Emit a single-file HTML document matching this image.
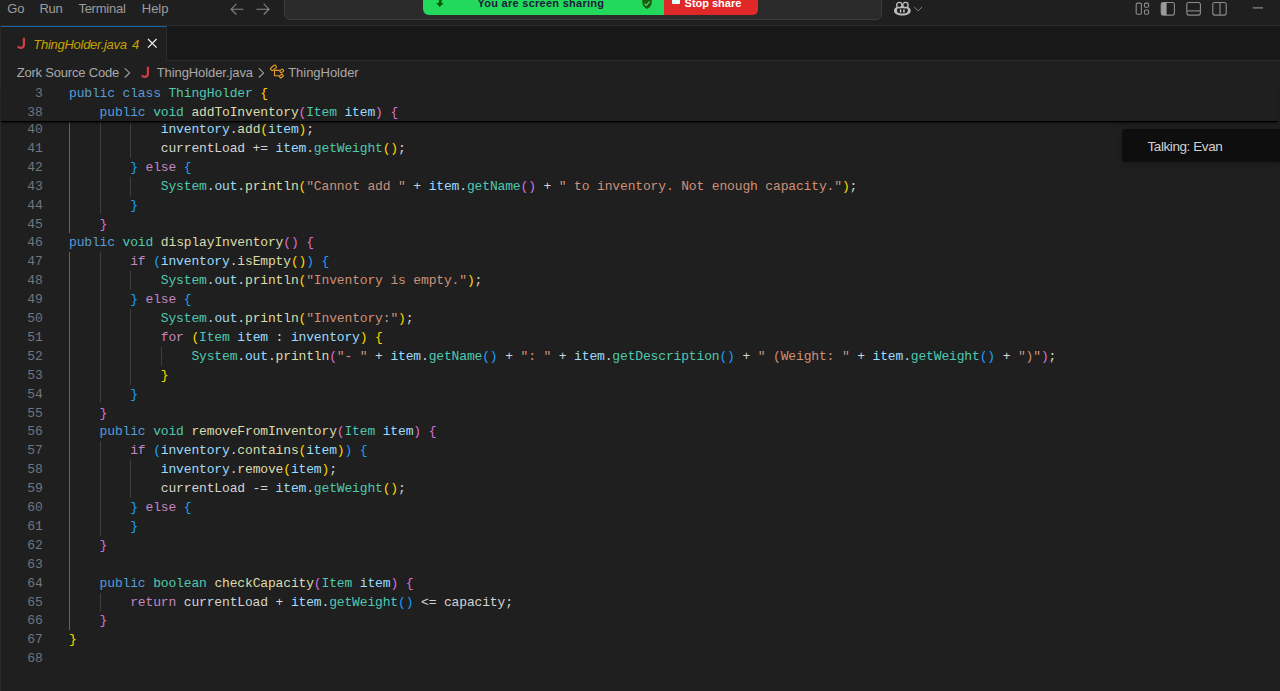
<!DOCTYPE html>
<html>
<head>
<meta charset="utf-8">
<title>ThingHolder.java</title>
<style>
*{box-sizing:border-box;margin:0;padding:0}
html,body{width:1280px;height:691px;overflow:hidden;background:#1f1f1f}
body{position:relative;font-family:"Liberation Sans",sans-serif;color:#cccccc}
.abs{position:absolute}
#titlebar{position:absolute;left:0;top:0;width:1280px;height:26px;background:#181818;border-bottom:1px solid #2b2b2b}
.menu{position:absolute;top:0;font-size:13px;line-height:17px;color:#cccccc;white-space:nowrap}
#tabbar{position:absolute;left:0;top:26px;width:1280px;height:35px;background:#181818;border-bottom:1px solid #2b2b2b}
#tab{position:absolute;left:1px;top:26px;width:166px;height:35px;background:#1f1f1f;border-top:1px solid #1b64a4;border-right:1px solid #2b2b2b}
#leftstrip{position:absolute;left:0;top:26px;width:1px;height:665px;background:#2a2a2a}
.ln{position:absolute;left:0;width:42.6px;text-align:right;font-family:"Liberation Mono",monospace;font-size:13px;letter-spacing:-0.15px;line-height:19px;height:19px;color:#6e7681;white-space:pre}
.cl{position:absolute;font-family:"Liberation Mono",monospace;font-size:13px;letter-spacing:-0.15px;line-height:19px;height:19px;white-space:pre;color:#d4d4d4}
.g{position:absolute;width:1px}
#editor{position:absolute;left:0;top:83px;width:1280px;height:608px;overflow:hidden}
#editor-inner{position:absolute;left:0;top:-83px;width:1280px;height:691px}
#sticky{position:absolute;left:1px;top:83px;width:1277px;height:38.4px;background:#1f1f1f;box-shadow:0 1.2px 0 #000, 0 3px 3px -1px rgba(0,0,0,.55)}
#stickyc{position:absolute;left:0;top:0;width:1280px;height:691px}
.bc{position:absolute;top:62px;height:22px;line-height:22px;font-size:13px;color:#a9a9a9;white-space:nowrap}

#titlebar{background:#1f1f1f}
.menu{color:#9d9d9d;top:-0.5px}
#cmd{position:absolute;left:284px;top:-8px;width:598px;height:28px;background:#2a2a2a;border:1px solid #3d3d3d;border-radius:6px}
#zgreen{position:absolute;left:423px;top:-6px;width:241px;height:21px;background:#23d95c;border-radius:0 0 0 6px}
#zred{position:absolute;left:663.5px;top:-6px;width:94.5px;height:21px;background:#e02828;border-radius:0 0 5px 0}
.ztxt{position:absolute;top:-4.5px;font-size:11px;font-weight:bold;line-height:14px;white-space:nowrap}
.jicon{font-size:15px;font-weight:bold;color:#cc3e44;line-height:17px}
.tablabel{font-size:13px;font-style:italic;color:#c6a200;line-height:17px;letter-spacing:-0.27px;white-space:nowrap}
#talk{position:absolute;left:1122px;top:129px;width:158px;height:33px;background:#0e0e0e;border-radius:3px 0 0 3px;box-shadow:0 2px 8px rgba(0,0,0,.18)}
#talk span{position:absolute;left:25.5px;top:9px;font-size:13.5px;line-height:17px;color:#d2d2d2;letter-spacing:-0.42px;white-space:nowrap}
</style>
</head>
<body>
<div id="titlebar"></div>
<div class="menu" style="left:7.2px;letter-spacing:-0.1px">Go</div>
<div class="menu" style="left:39.6px;letter-spacing:-0.4px">Run</div>
<div class="menu" style="left:78.4px;letter-spacing:-0.25px">Terminal</div>
<div class="menu" style="left:141.8px;letter-spacing:-0.05px">Help</div>

<!-- nav arrows -->
<svg class="abs" style="left:228px;top:1px" width="44" height="17" viewBox="0 0 44 17" fill="none" stroke="#868686" stroke-width="1.1" stroke-linecap="butt" stroke-linejoin="miter">
<path d="M8.4 2.9 L3.1 8.2 L8.4 13.5 M3.3 8.2 H15.4"/>
<path d="M35.7 2.9 L41 8.2 L35.7 13.5 M40.8 8.2 H28.4"/>
</svg>

<!-- command center -->
<div id="cmd"></div>

<!-- zoom share banner -->
<div id="zgreen"></div>
<div id="zred"></div>
<div class="ztxt" style="left:477.5px;color:#1c1a3c;letter-spacing:0.27px">You are screen sharing</div>
<div class="ztxt" style="left:684.6px;color:#ffffff;letter-spacing:-0.02px">Stop share</div>
<svg class="abs" style="left:434px;top:0" width="12" height="9" viewBox="0 0 12 9"><path d="M5.1 0 L7.9 0 L7.5 2.9 L9.8 2.9 L5.7 7.1 L2.2 2.9 L4.6 2.9 Z" fill="#0a5c00"/></svg>
<svg class="abs" style="left:641px;top:0" width="12" height="10" viewBox="0 0 12 10"><path d="M1.3 0 H10.8 V2.2 C10.8 5.4 8.9 7.6 6.05 8.9 C3.2 7.6 1.3 5.4 1.3 2.2 Z" fill="#1d5a12"/><path d="M3.6 3.6 L5.3 5.3 L8.6 1.7" fill="none" stroke="#3fe06a" stroke-width="1.2"/></svg>
<div class="abs" style="left:672px;top:0;width:8px;height:4px;background:#e2ffff;border-radius:0 0 1px 1px"></div>

<!-- copilot -->
<svg class="abs" style="left:892px;top:0" width="34" height="18" viewBox="0 0 34 18">
<path fill="#bdbdbd" fill-rule="evenodd" d="M10.35 5.6 C15.6 5.6 18.7 8.2 18.7 10.9 C18.7 13.4 15.2 15.5 10.35 15.5 C5.5 15.5 2 13.4 2 10.9 C2 8.2 5.1 5.6 10.35 5.6 Z M6.7 8.2 C5.7 8.2 5 8.9 5 9.9 V11.1 C5 12.4 6.4 13.4 8 13.4 H12.8 C14.4 13.4 15.8 12.4 15.8 11.1 V9.9 C15.8 8.9 15.1 8.2 14.1 8.2 Z"/>
<circle cx="7.3" cy="5" r="2.7" fill="#1f1f1f" stroke="#bdbdbd" stroke-width="1.3"/>
<circle cx="13.45" cy="5" r="2.7" fill="#1f1f1f" stroke="#bdbdbd" stroke-width="1.3"/>
<path d="M8.55 9.6 V12.4 M11.95 9.6 V12.4" stroke="#cfcfcf" stroke-width="1.4" fill="none"/>
<path d="M22.1 7 L26.15 10.9 L30.1 7" stroke="#858585" stroke-width="1" fill="none"/>
</svg>

<!-- layout icons -->
<svg class="abs" style="left:1130px;top:0" width="140" height="18" viewBox="0 0 140 18" fill="none" stroke="#8c8c8c" stroke-width="1.1">
<rect x="6.2" y="3.1" width="5.2" height="11.1" rx="1.2"/>
<rect x="14.4" y="3.1" width="4.2" height="4.2" rx="1.2"/>
<rect x="14.4" y="10" width="4.2" height="4.2" rx="1.2"/>
<rect x="31.2" y="2.5" width="13.2" height="12.6" rx="2"/>
<path d="M31.2 4.5 C31.2 3.4 32.1 2.5 33.2 2.5 H36.6 V15.1 H33.2 C32.1 15.1 31.2 14.2 31.2 13.1 Z" fill="#9a9a9a" stroke="none"/>
<rect x="56.8" y="2.5" width="13.6" height="12.6" rx="2"/>
<path d="M56.8 10.9 H70.4"/>
<rect x="82.8" y="2.5" width="13.4" height="12.6" rx="2"/>
<path d="M90 2.5 V15.1"/>
<path d="M122.8 7.9 H133" stroke="#9a9a9a" stroke-width="1.1"/>
</svg>

<div id="tabbar"></div>
<div id="tab"></div>
<div id="leftstrip"></div>
<svg class="abs" style="left:14px;top:34px" width="14" height="18" viewBox="0 0 14 18" fill="none" stroke="#cc3e48" stroke-width="2.2"><path d="M9.9 3.8 V10.6 C9.9 13 8.4 13.9 6.8 13.9 C5.6 13.9 4.6 13.4 3.8 12.3"/></svg>
<div class="abs tablabel" style="left:33.3px;top:36px">ThingHolder.java<span style="margin-left:5.2px">4</span></div>
<svg class="abs" style="left:146px;top:37.3px" width="13" height="13" viewBox="0 0 13 13" fill="none" stroke="#f0f0f0" stroke-width="1.25"><path d="M2 2 L10.6 10.6 M10.6 2 L2 10.6"/></svg>

<!-- breadcrumbs -->
<div class="bc" style="left:16.7px;letter-spacing:-0.2px">Zork Source Code</div>
<svg class="abs" style="left:122px;top:66px" width="10" height="13" viewBox="0 0 10 13" fill="none" stroke="#a0a0a0" stroke-width="1.1"><path d="M2.8 2.3 L7.6 6.9 L2.8 11.5"/></svg>
<svg class="abs" style="left:138px;top:62.5px" width="14" height="18" viewBox="0 0 14 18" fill="none" stroke="#cc3e48" stroke-width="2.2"><path d="M9.9 3.8 V10.6 C9.9 13 8.4 13.9 6.8 13.9 C5.6 13.9 4.6 13.4 3.8 12.3"/></svg>
<div class="bc" style="left:156.7px;letter-spacing:-0.08px">ThingHolder.java</div>
<svg class="abs" style="left:256px;top:66px" width="10" height="13" viewBox="0 0 10 13" fill="none" stroke="#a0a0a0" stroke-width="1.1"><path d="M2.8 2.3 L7.6 6.9 L2.8 11.5"/></svg>
<svg class="abs" style="left:268px;top:62px" width="18" height="18" viewBox="0 0 18 18" fill="none" stroke="#ee9d28" stroke-width="1.1">
<rect x="2.4" y="4.25" width="6.2" height="3.1" rx="1" transform="rotate(-40 5.5 5.8)"/>
<rect x="11.9" y="7.65" width="3.7" height="2.5" rx="0.7" transform="rotate(-40 13.75 8.9)"/>
<rect x="11.5" y="12.8" width="3.7" height="2.5" rx="0.7" transform="rotate(-40 13.35 14.05)"/>
<path d="M6.5 8.35 H11.7 M6.5 7.8 V13.8 H11.3"/>
</svg>
<div class="bc" style="left:288.2px;letter-spacing:-0.03px">ThingHolder</div>

<!-- talking box -->
<div id="talk"><span>Talking: Evan</span></div>

<div id="editor"><div id="editor-inner">
<div class="g" style="left:69px;top:101.1px;height:132.3px;background:#626262"></div>
<div class="g" style="left:69px;top:252.3px;height:378px;background:#626262"></div>
<div class="g" style="left:99.6px;top:101.1px;height:113.4px;background:#3e3e3e"></div>
<div class="g" style="left:99.6px;top:252.3px;height:151.2px;background:#3e3e3e"></div>
<div class="g" style="left:99.6px;top:441.3px;height:94.5px;background:#3e3e3e"></div>
<div class="g" style="left:99.6px;top:592.5px;height:18.9px;background:#3e3e3e"></div>
<div class="g" style="left:130.2px;top:101.1px;height:56.7px;background:#3e3e3e"></div>
<div class="g" style="left:130.2px;top:176.7px;height:18.9px;background:#3e3e3e"></div>
<div class="g" style="left:130.2px;top:271.2px;height:18.9px;background:#3e3e3e"></div>
<div class="g" style="left:130.2px;top:309px;height:75.6px;background:#3e3e3e"></div>
<div class="g" style="left:130.2px;top:460.2px;height:37.8px;background:#3e3e3e"></div>
<div class="g" style="left:160.8px;top:346.8px;height:18.9px;background:#3e3e3e"></div>
<div class="ln" style="top:120px">40</div>
<div class="cl" style="top:120px;left:160.8px"><span style="color:#9cdcfe">inventory</span><span style="color:#d4d4d4">.</span><span style="color:#dcdcaa">add</span><span style="color:#ffd700">(</span><span style="color:#9cdcfe">item</span><span style="color:#ffd700">)</span><span style="color:#d4d4d4">;</span></div>
<div class="ln" style="top:138.9px">41</div>
<div class="cl" style="top:138.9px;left:160.8px"><span style="color:#d4d4d4">currentLoad += </span><span style="color:#9cdcfe">item</span><span style="color:#d4d4d4">.</span><span style="color:#4ec9b0">getWeight</span><span style="color:#ffd700">()</span><span style="color:#d4d4d4">;</span></div>
<div class="ln" style="top:157.8px">42</div>
<div class="cl" style="top:157.8px;left:130.2px"><span style="color:#179fff">}</span><span style="color:#c586c0"> else </span><span style="color:#179fff">{</span></div>
<div class="ln" style="top:176.7px">43</div>
<div class="cl" style="top:176.7px;left:160.8px"><span style="color:#4ec9b0">System</span><span style="color:#d4d4d4">.</span><span style="color:#9cdcfe">out</span><span style="color:#d4d4d4">.</span><span style="color:#dcdcaa">println</span><span style="color:#ffd700">(</span><span style="color:#ce9178">"Cannot add "</span><span style="color:#d4d4d4"> + </span><span style="color:#9cdcfe">item</span><span style="color:#d4d4d4">.</span><span style="color:#4ec9b0">getName</span><span style="color:#da70d6">()</span><span style="color:#d4d4d4"> + </span><span style="color:#ce9178">" to inventory. Not enough capacity."</span><span style="color:#ffd700">)</span><span style="color:#d4d4d4">;</span></div>
<div class="ln" style="top:195.6px">44</div>
<div class="cl" style="top:195.6px;left:130.2px"><span style="color:#179fff">}</span></div>
<div class="ln" style="top:214.5px">45</div>
<div class="cl" style="top:214.5px;left:99.6px"><span style="color:#da70d6">}</span></div>
<div class="ln" style="top:233.4px">46</div>
<div class="cl" style="top:233.4px;left:69px"><span style="color:#569cd6">public </span><span style="color:#4ec9b0">void </span><span style="color:#dcdcaa">displayInventory</span><span style="color:#da70d6">()</span><span style="color:#d4d4d4"> </span><span style="color:#da70d6">{</span></div>
<div class="ln" style="top:252.3px">47</div>
<div class="cl" style="top:252.3px;left:130.2px"><span style="color:#c586c0">if </span><span style="color:#179fff">(</span><span style="color:#9cdcfe">inventory</span><span style="color:#d4d4d4">.</span><span style="color:#dcdcaa">isEmpty</span><span style="color:#ffd700">()</span><span style="color:#179fff">)</span><span style="color:#d4d4d4"> </span><span style="color:#179fff">{</span></div>
<div class="ln" style="top:271.2px">48</div>
<div class="cl" style="top:271.2px;left:160.8px"><span style="color:#4ec9b0">System</span><span style="color:#d4d4d4">.</span><span style="color:#9cdcfe">out</span><span style="color:#d4d4d4">.</span><span style="color:#dcdcaa">println</span><span style="color:#ffd700">(</span><span style="color:#ce9178">"Inventory is empty."</span><span style="color:#ffd700">)</span><span style="color:#d4d4d4">;</span></div>
<div class="ln" style="top:290.1px">49</div>
<div class="cl" style="top:290.1px;left:130.2px"><span style="color:#179fff">}</span><span style="color:#c586c0"> else </span><span style="color:#179fff">{</span></div>
<div class="ln" style="top:309px">50</div>
<div class="cl" style="top:309px;left:160.8px"><span style="color:#4ec9b0">System</span><span style="color:#d4d4d4">.</span><span style="color:#9cdcfe">out</span><span style="color:#d4d4d4">.</span><span style="color:#dcdcaa">println</span><span style="color:#ffd700">(</span><span style="color:#ce9178">"Inventory:"</span><span style="color:#ffd700">)</span><span style="color:#d4d4d4">;</span></div>
<div class="ln" style="top:327.9px">51</div>
<div class="cl" style="top:327.9px;left:160.8px"><span style="color:#c586c0">for </span><span style="color:#ffd700">(</span><span style="color:#4ec9b0">Item </span><span style="color:#9cdcfe">item</span><span style="color:#d4d4d4"> : </span><span style="color:#9cdcfe">inventory</span><span style="color:#ffd700">)</span><span style="color:#d4d4d4"> </span><span style="color:#ffd700">{</span></div>
<div class="ln" style="top:346.8px">52</div>
<div class="cl" style="top:346.8px;left:191.4px"><span style="color:#4ec9b0">System</span><span style="color:#d4d4d4">.</span><span style="color:#9cdcfe">out</span><span style="color:#d4d4d4">.</span><span style="color:#dcdcaa">println</span><span style="color:#da70d6">(</span><span style="color:#ce9178">"- "</span><span style="color:#d4d4d4"> + </span><span style="color:#9cdcfe">item</span><span style="color:#d4d4d4">.</span><span style="color:#4ec9b0">getName</span><span style="color:#179fff">()</span><span style="color:#d4d4d4"> + </span><span style="color:#ce9178">": "</span><span style="color:#d4d4d4"> + </span><span style="color:#9cdcfe">item</span><span style="color:#d4d4d4">.</span><span style="color:#4ec9b0">getDescription</span><span style="color:#179fff">()</span><span style="color:#d4d4d4"> + </span><span style="color:#ce9178">" (Weight: "</span><span style="color:#d4d4d4"> + </span><span style="color:#9cdcfe">item</span><span style="color:#d4d4d4">.</span><span style="color:#4ec9b0">getWeight</span><span style="color:#179fff">()</span><span style="color:#d4d4d4"> + </span><span style="color:#ce9178">")"</span><span style="color:#da70d6">)</span><span style="color:#d4d4d4">;</span></div>
<div class="ln" style="top:365.7px">53</div>
<div class="cl" style="top:365.7px;left:160.8px"><span style="color:#ffd700">}</span></div>
<div class="ln" style="top:384.6px">54</div>
<div class="cl" style="top:384.6px;left:130.2px"><span style="color:#179fff">}</span></div>
<div class="ln" style="top:403.5px">55</div>
<div class="cl" style="top:403.5px;left:99.6px"><span style="color:#da70d6">}</span></div>
<div class="ln" style="top:422.4px">56</div>
<div class="cl" style="top:422.4px;left:99.6px"><span style="color:#569cd6">public </span><span style="color:#4ec9b0">void </span><span style="color:#dcdcaa">removeFromInventory</span><span style="color:#da70d6">(</span><span style="color:#4ec9b0">Item </span><span style="color:#9cdcfe">item</span><span style="color:#da70d6">)</span><span style="color:#d4d4d4"> </span><span style="color:#da70d6">{</span></div>
<div class="ln" style="top:441.3px">57</div>
<div class="cl" style="top:441.3px;left:130.2px"><span style="color:#c586c0">if </span><span style="color:#179fff">(</span><span style="color:#9cdcfe">inventory</span><span style="color:#d4d4d4">.</span><span style="color:#dcdcaa">contains</span><span style="color:#ffd700">(</span><span style="color:#9cdcfe">item</span><span style="color:#ffd700">)</span><span style="color:#179fff">)</span><span style="color:#d4d4d4"> </span><span style="color:#179fff">{</span></div>
<div class="ln" style="top:460.2px">58</div>
<div class="cl" style="top:460.2px;left:160.8px"><span style="color:#9cdcfe">inventory</span><span style="color:#d4d4d4">.</span><span style="color:#dcdcaa">remove</span><span style="color:#ffd700">(</span><span style="color:#9cdcfe">item</span><span style="color:#ffd700">)</span><span style="color:#d4d4d4">;</span></div>
<div class="ln" style="top:479.1px">59</div>
<div class="cl" style="top:479.1px;left:160.8px"><span style="color:#d4d4d4">currentLoad -= </span><span style="color:#9cdcfe">item</span><span style="color:#d4d4d4">.</span><span style="color:#4ec9b0">getWeight</span><span style="color:#ffd700">()</span><span style="color:#d4d4d4">;</span></div>
<div class="ln" style="top:498px">60</div>
<div class="cl" style="top:498px;left:130.2px"><span style="color:#179fff">}</span><span style="color:#c586c0"> else </span><span style="color:#179fff">{</span></div>
<div class="ln" style="top:516.9px">61</div>
<div class="cl" style="top:516.9px;left:130.2px"><span style="color:#179fff">}</span></div>
<div class="ln" style="top:535.8px">62</div>
<div class="cl" style="top:535.8px;left:99.6px"><span style="color:#da70d6">}</span></div>
<div class="ln" style="top:554.7px">63</div>
<div class="ln" style="top:573.6px">64</div>
<div class="cl" style="top:573.6px;left:99.6px"><span style="color:#569cd6">public </span><span style="color:#4ec9b0">boolean </span><span style="color:#dcdcaa">checkCapacity</span><span style="color:#da70d6">(</span><span style="color:#4ec9b0">Item </span><span style="color:#9cdcfe">item</span><span style="color:#da70d6">)</span><span style="color:#d4d4d4"> </span><span style="color:#da70d6">{</span></div>
<div class="ln" style="top:592.5px">65</div>
<div class="cl" style="top:592.5px;left:130.2px"><span style="color:#c586c0">return </span><span style="color:#d4d4d4">currentLoad + </span><span style="color:#9cdcfe">item</span><span style="color:#d4d4d4">.</span><span style="color:#4ec9b0">getWeight</span><span style="color:#179fff">()</span><span style="color:#d4d4d4"> &lt;= capacity;</span></div>
<div class="ln" style="top:611.4px">66</div>
<div class="cl" style="top:611.4px;left:99.6px"><span style="color:#da70d6">}</span></div>
<div class="ln" style="top:630.3px">67</div>
<div class="cl" style="top:630.3px;left:69px"><span style="color:#ffd700">}</span></div>
<div class="ln" style="top:649.2px">68</div>
</div></div>
<div id="sticky"></div>
<div id="stickyc">
<div class="ln" style="top:84.4px">3</div>
<div class="cl" style="top:84.4px;left:69px"><span style="color:#569cd6">public class </span><span style="color:#4ec9b0">ThingHolder </span><span style="color:#ffd700">{</span></div>
<div class="ln" style="top:103.3px">38</div>
<div class="cl" style="top:103.3px;left:99.6px"><span style="color:#569cd6">public </span><span style="color:#4ec9b0">void </span><span style="color:#dcdcaa">addToInventory</span><span style="color:#da70d6">(</span><span style="color:#4ec9b0">Item </span><span style="color:#9cdcfe">item</span><span style="color:#da70d6">)</span><span style="color:#d4d4d4"> </span><span style="color:#da70d6">{</span></div>
</div>
</body>
</html>
